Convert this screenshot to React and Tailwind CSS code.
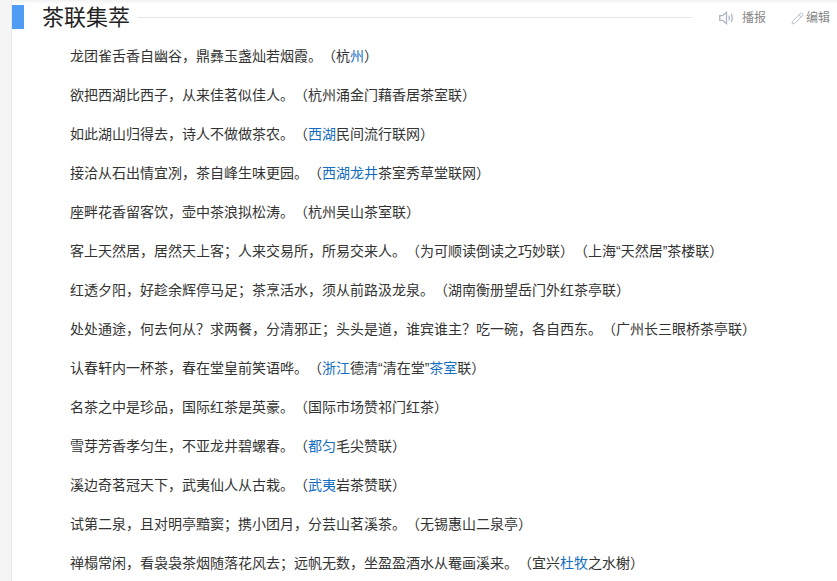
import { Pencil } from 'lucide-react'

const font = "font-['Liberation_Sans','Noto_Sans_CJK_SC',sans-serif]"

// each line is a list of [text, isLink]
const lines = [
  [['龙团雀舌香自幽谷，鼎彝玉盏灿若烟霞。（杭', 0], ['州', 1], ['）', 0]],
  [['欲把西湖比西子，从来佳茗似佳人。（杭州涌金门藉香居茶室联）', 0]],
  [['如此湖山归得去，诗人不做做茶农。（', 0], ['西湖', 1], ['民间流行联网）', 0]],
  [['接洽从石出情宜冽，茶自峰生味更园。（', 0], ['西湖龙井', 1], ['茶室秀草堂联网）', 0]],
  [['座畔花香留客饮，壶中茶浪拟松涛。（杭州吴山茶室联）', 0]],
  [['客上天然居，居然天上客；人来交易所，所易交来人。（为可顺读倒读之巧妙联）（上海“天然居”茶楼联）', 0]],
  [['红透夕阳，好趁余辉停马足；茶烹活水，须从前路汲龙泉。（湖南衡册望岳门外红茶亭联）', 0]],
  [['处处通途，何去何从？求两餐，分清邪正；头头是道，谁宾谁主？吃一碗，各自西东。（广州长三眼桥茶亭联）', 0]],
  [['认春轩内一杯茶，春在堂皇前笑语哗。（', 0], ['浙江', 1], ['德清“清在堂”', 0], ['茶室', 1], ['联）', 0]],
  [['名茶之中是珍品，国际红茶是英豪。（国际市场赞祁门红茶）', 0]],
  [['雪芽芳香孝匀生，不亚龙井碧螺春。（', 0], ['都匀', 1], ['毛尖赞联）', 0]],
  [['溪边奇茗冠天下，武夷仙人从古栽。（', 0], ['武夷', 1], ['岩茶赞联）', 0]],
  [['试第二泉，且对明亭黯窦；携小团月，分芸山茗溪茶。（无锡惠山二泉亭）', 0]],
  [['禅榻常闲，看袅袅茶烟随落花风去；远帆无数，坐盈盈酒水从罨画溪来。（宜兴', 0], ['杜牧', 1], ['之水榭）', 0]],
]

function SpeakerIcon() {
  return (
    <svg width="15" height="14" viewBox="0 0 16 14" fill="none" stroke="#aeb7c2" strokeWidth="1.4">
      <path d="M0.8 4.5h3L8 1v12L3.8 9.5h-3z" />
      <path d="M10.5 4.5c.8 1.5.8 3.5 0 5" />
      <path d="M13 2.5c1.4 2.8 1.4 6.2 0 9" />
    </svg>
  )
}

export default function App() {
  return (
    <div className={`${font} w-[837px] h-[581px] overflow-hidden flex bg-white [text-spacing-trim:space-all]`}>
      <div className="w-[12px] shrink-0 bg-[#f5f5f5] border-r border-[#e8e8e8]" />
      <div className="flex-1 min-w-0 flex flex-col shadow-[inset_0_4px_3px_-2px_rgba(0,0,0,0.06)]">
        <div className="h-[37px] shrink-0 flex items-start">
          <div className="w-[12px] h-[24px] mt-[5px] shrink-0 bg-[#4f9cf5]" />
          <h2 className="ml-[18px] mt-[3px] text-[22px] leading-[29px] font-normal text-[#222] whitespace-nowrap shrink-0">茶联集萃</h2>
          <div className="ml-[8px] mt-[17px] w-[555px] h-px shrink-0 bg-[#e6e6e6]" />
          <div className="ml-[26px] mt-[9px] flex items-center text-[12px] leading-[18px] text-[#888] whitespace-nowrap shrink-0">
            <SpeakerIcon />
            <span className="ml-[8px]">播报</span>
            <Pencil size={13} color="#aeb7c2" strokeWidth={1.6} className="ml-[25px]" />
            <span className="ml-[2px]">编辑</span>
          </div>
        </div>
        <div className="pl-[58px] flex flex-col gap-[15px] pt-[7px]">
          {lines.map((parts, i) => (
            <p key={i} className="text-[14px] leading-[24px] text-[#333] whitespace-nowrap">
              {parts.map(([text, link], j) =>
                link ? <a key={j} className="text-[#136ec2]">{text}</a> : <span key={j}>{text}</span>
              )}
            </p>
          ))}
        </div>
      </div>
    </div>
  )
}
